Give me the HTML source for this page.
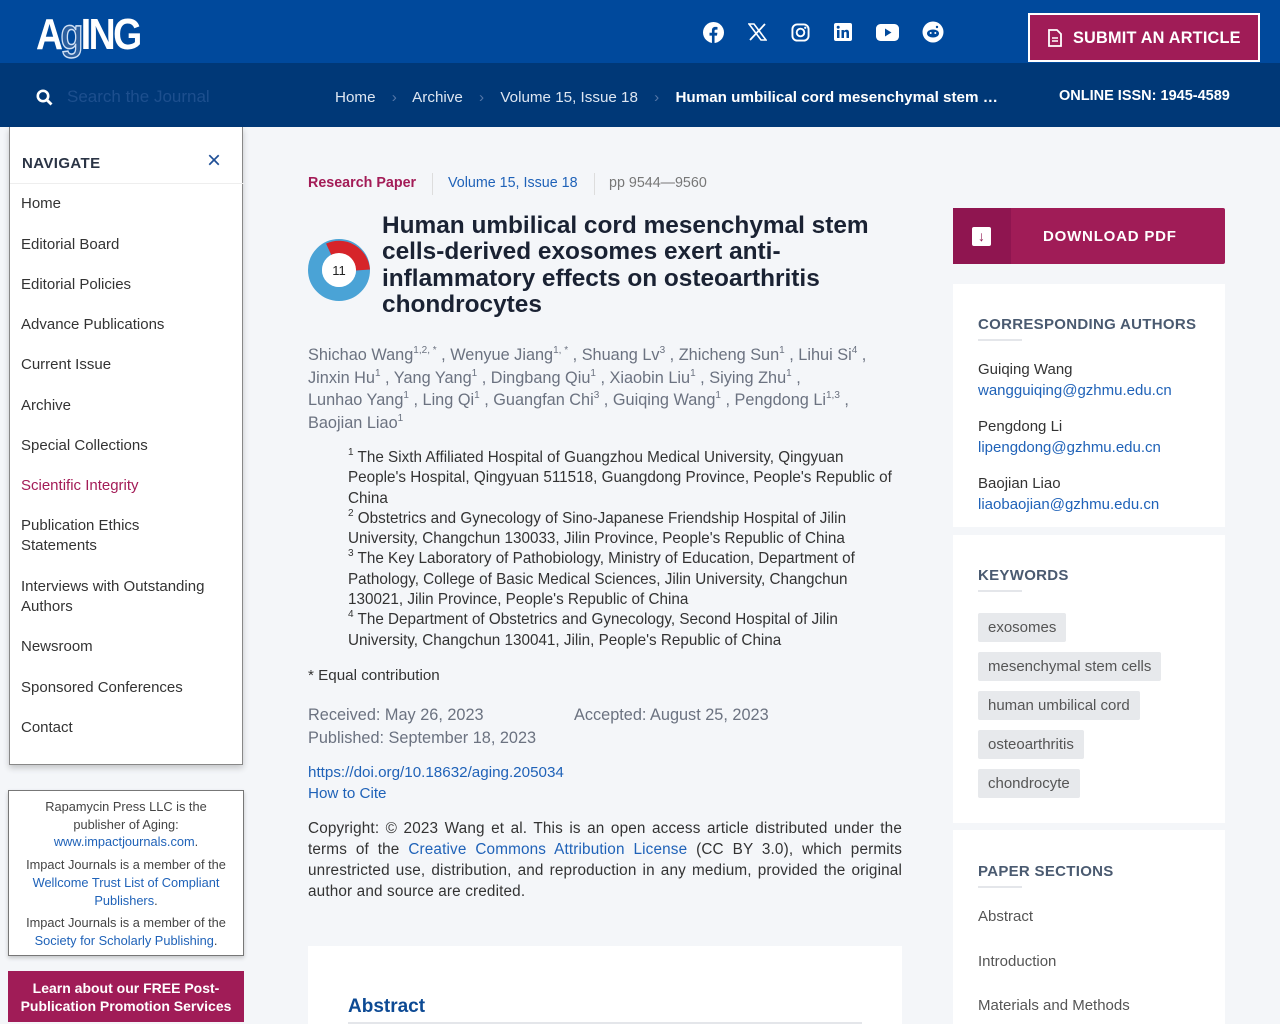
<!DOCTYPE html>
<html><head><meta charset="utf-8"><style>
*{margin:0;padding:0;box-sizing:border-box}
body{width:1280px;height:1024px;overflow:hidden;background:#f4f6f9;font-family:"Liberation Sans",Arial,sans-serif;position:relative;color:#333}
.a{position:absolute;white-space:nowrap}
#top{position:absolute;left:0;top:0;width:1280px;height:63px;background:#00499c}
#bar{position:absolute;left:0;top:63px;width:1280px;height:64px;background:#003877}
.nav{position:absolute;left:9px;top:127px;width:234px;height:638px;background:#fff;border:1px solid #888;border-top:none;box-shadow:0 3px 6px rgba(0,0,0,.2)}
.nav .i{position:absolute;left:11px;font-size:15px;color:#333;line-height:20px}
.blue{color:#1f62b8}
.card{position:absolute;background:#fff;left:953px;width:272px}
.kw{position:absolute;left:25px;height:29px;background:#e7e9ec;color:#555;font-size:15px;line-height:29px;padding:0 10px;border-radius:2px}
.h{position:absolute;left:25px;font-size:15px;font-weight:bold;color:#4a5a70;letter-spacing:.3px}
.ul{position:absolute;left:25px;width:44px;height:2px;background:#e4e6ea}
.au{font-size:16.3px;color:#6b7280;line-height:22.5px}
sup{font-size:10px;vertical-align:7px;line-height:0}
.aff{font-size:15.25px;color:#333;line-height:20.3px}
</style></head><body>
<div id="top"></div><div id="bar"></div>
<div class="a" style="left:36px;top:10px;font:bold 44px/50px 'Liberation Sans';color:#fff;letter-spacing:-3px;transform:scaleX(.85);transform-origin:left">A<span style="color:#2c5f9e;-webkit-text-stroke:1.5px #cfe0f5">g</span>ING</div>
<svg class="a" style="left:703px;top:22px" width="21" height="21" viewBox="0 0 20 20"><circle cx="10" cy="10" r="10" fill="#fff"/><path d="M11 20v-7h2.3l.4-2.8H11V8.6c0-.8.3-1.3 1.4-1.3h1.4V4.8c-.3 0-1.1-.1-2-.1-2 0-3.3 1.2-3.3 3.4v2.1H6.2V13h2.3v7z" fill="#00499c"/></svg>
<svg class="a" style="left:748px;top:23px" width="19" height="18" viewBox="0 0 19 18"><path d="M1 1h5l12 16h-5z" fill="none" stroke="#fff" stroke-width="1.6"/><path d="M17 1L2 17" stroke="#fff" stroke-width="1.8"/></svg>
<svg class="a" style="left:791px;top:23px" width="19" height="19" viewBox="0 0 20 20"><rect x="1.5" y="1.5" width="17" height="17" rx="5" fill="none" stroke="#fff" stroke-width="2"/><circle cx="10" cy="10" r="4" fill="none" stroke="#fff" stroke-width="2"/><circle cx="15" cy="5" r="1.2" fill="#fff"/></svg>
<svg class="a" style="left:834px;top:23px" width="18" height="18" viewBox="0 0 18 18"><rect width="18" height="18" rx="2" fill="#fff"/><rect x="3" y="7" width="2.5" height="8" fill="#00499c"/><circle cx="4.2" cy="4.3" r="1.5" fill="#00499c"/><path d="M7.5 7h2.4v1.2c.5-.9 1.5-1.4 2.6-1.4 2 0 2.5 1.3 2.5 3V15h-2.5v-4.6c0-1-.3-1.6-1.2-1.6s-1.3.7-1.3 1.6V15H7.5z" fill="#00499c"/></svg>
<svg class="a" style="left:876px;top:24px" width="23" height="17" viewBox="0 0 23 17"><rect width="23" height="17" rx="4.5" fill="#fff"/><path d="M9 4.5v8l6.5-4z" fill="#00499c"/></svg>
<svg class="a" style="left:922px;top:21px" width="22" height="22" viewBox="0 0 22 22"><circle cx="11" cy="11" r="10.5" fill="#fff"/><ellipse cx="11" cy="12.5" rx="6" ry="4" fill="#00499c"/><circle cx="8.7" cy="12" r="1" fill="#fff"/><circle cx="13.3" cy="12" r="1" fill="#fff"/><circle cx="15" cy="6" r="1.2" fill="#00499c"/></svg>
<div class="a" style="left:1028px;top:13px;width:232px;height:49px;background:#a01c57;border:2px solid #fff"></div>
<svg class="a" style="left:1048px;top:29px" width="14" height="18" viewBox="0 0 14 18"><path d="M1 1h8l4 4v12H1z" fill="none" stroke="#fff" stroke-width="1.8"/><path d="M4 9h6M4 12h6" stroke="#fff" stroke-width="1.6"/></svg>
<div class="a" style="left:1073px;top:29px;color:#fff;font-size:16.3px;font-weight:bold;letter-spacing:.2px">SUBMIT AN ARTICLE</div>
<svg class="a" style="left:36px;top:89px" width="17" height="17" viewBox="0 0 17 17"><circle cx="7" cy="7" r="5.2" fill="none" stroke="#fff" stroke-width="2.6"/><path d="M11 11l4.5 4.5" stroke="#fff" stroke-width="2.8"/></svg>
<div class="a" style="left:67px;top:87px;color:#1d4f8e;font-size:17px">Search the Journal</div>
<div class="a" style="left:335px;top:89px;color:#dde6f2;font-size:15.2px">Home <span style="color:#5577a8;margin:0 12px">›</span> Archive <span style="color:#5577a8;margin:0 12px">›</span> Volume 15, Issue 18 <span style="color:#5577a8;margin:0 12px">›</span> <b style="color:#fff">Human umbilical cord mesenchymal stem …</b></div>
<div class="a" style="left:1059px;top:88px;color:#fff;font-size:14.5px;font-weight:bold">ONLINE ISSN: 1945-4589</div>
<div class="nav">
<div class="a" style="left:12px;top:28px;font-size:15px;font-weight:bold;color:#2b3445;letter-spacing:.4px">NAVIGATE</div>
<div class="a" style="left:197px;top:20px;font-size:24px;color:#1f4f96">×</div>
<div style="position:absolute;left:0;top:56px;width:234px;height:1px;background:#eee"></div>
<div class="i" style="top:67px">Home</div>
<div class="i" style="top:108px">Editorial Board</div>
<div class="i" style="top:148px">Editorial Policies</div>
<div class="i" style="top:188px">Advance Publications</div>
<div class="i" style="top:228px">Current Issue</div>
<div class="i" style="top:269px">Archive</div>
<div class="i" style="top:309px">Special Collections</div>
<div class="i" style="top:349px;color:#a31c57">Scientific Integrity</div>
<div class="i" style="top:389px">Publication Ethics<br>Statements</div>
<div class="i" style="top:450px">Interviews with Outstanding<br>Authors</div>
<div class="i" style="top:510px">Newsroom</div>
<div class="i" style="top:551px">Sponsored Conferences</div>
<div class="i" style="top:591px">Contact</div>
</div>
<div class="a" style="left:8px;top:790px;width:236px;height:166px;background:#fff;border:1px solid #777;box-shadow:0 2px 4px rgba(0,0,0,.2);white-space:normal;text-align:center;font-size:12.8px;line-height:17.7px;color:#444;padding-top:7px">
<div>Rapamycin Press LLC is the<br>publisher of Aging:<br><span class="blue">www.impactjournals.com</span>.</div>
<div style="margin-top:5px">Impact Journals is a member of the<br><span class="blue">Wellcome Trust List of Compliant<br>Publishers</span>.</div>
<div style="margin-top:5px">Impact Journals is a member of the<br><span class="blue">Society for Scholarly Publishing</span>.</div></div>
<div class="a" style="left:8px;top:971px;width:236px;height:51px;background:#a01c57;color:#fff;font-size:14px;font-weight:bold;text-align:center;line-height:18px;padding-top:8px">Learn about our FREE Post-<br>Publication Promotion Services</div>
<div class="a" style="left:308px;top:175px;font-size:14.3px"><b style="color:#a31c57">Research Paper</b></div>
<div class="a" style="left:432px;top:173px;width:1px;height:22px;background:#ddd"></div>
<div class="a" style="left:448px;top:175px;font-size:14.3px;color:#1f62b8">Volume 15, Issue 18</div>
<div class="a" style="left:594px;top:173px;width:1px;height:22px;background:#ddd"></div>
<div class="a" style="left:609px;top:175px;font-size:14.3px;color:#777">pp 9544—9560</div>
<svg class="a" style="left:307px;top:238px" width="66" height="64" viewBox="0 0 66 64"><circle cx="32" cy="32" r="24" fill="none" stroke="#4aa3d6" stroke-width="14"/><path d="M22 12A24 24 0 0 1 56 32" fill="none" stroke="#d6242a" stroke-width="14"/><circle cx="32" cy="32" r="17" fill="#fff"/><text x="32" y="37" text-anchor="middle" font-size="13" font-family="Liberation Sans" fill="#222">11</text></svg>
<div class="a" style="left:382px;top:213px;font-size:24.4px;font-weight:bold;color:#1a2233;line-height:26.3px">Human umbilical cord mesenchymal stem<br>cells-derived exosomes exert anti-<br>inflammatory effects on osteoarthritis<br>chondrocytes</div>
<div class="a au" style="left:308px;top:344px">Shichao Wang<sup>1,2, *</sup> , Wenyue Jiang<sup>1, *</sup> , Shuang Lv<sup>3</sup> , Zhicheng Sun<sup>1</sup> , Lihui Si<sup>4</sup> ,<br>Jinxin Hu<sup>1</sup> , Yang Yang<sup>1</sup> , Dingbang Qiu<sup>1</sup> , Xiaobin Liu<sup>1</sup> , Siying Zhu<sup>1</sup> ,<br>Lunhao Yang<sup>1</sup> , Ling Qi<sup>1</sup> , Guangfan Chi<sup>3</sup> , Guiqing Wang<sup>1</sup> , Pengdong Li<sup>1,3</sup> ,<br>Baojian Liao<sup>1</sup></div>
<div class="a aff" style="left:348px;top:448px"><sup>1</sup> The Sixth Affiliated Hospital of Guangzhou Medical University, Qingyuan<br>People's Hospital, Qingyuan 511518, Guangdong Province, People's Republic of<br>China<br><sup>2</sup> Obstetrics and Gynecology of Sino-Japanese Friendship Hospital of Jilin<br>University, Changchun 130033, Jilin Province, People's Republic of China<br><sup>3</sup> The Key Laboratory of Pathobiology, Ministry of Education, Department of<br>Pathology, College of Basic Medical Sciences, Jilin University, Changchun<br>130021, Jilin Province, People's Republic of China<br><sup>4</sup> The Department of Obstetrics and Gynecology, Second Hospital of Jilin<br>University, Changchun 130041, Jilin, People's Republic of China</div>
<div class="a" style="left:308px;top:667px;font-size:15.2px;color:#333">* Equal contribution</div>
<div class="a" style="left:308px;top:704px;font-size:16.3px;color:#6b7280;line-height:23px">Received: May 26, 2023<br>Published: September 18, 2023</div>
<div class="a" style="left:574px;top:704px;font-size:16.3px;color:#6b7280;line-height:23px">Accepted: August 25, 2023</div>
<div class="a" style="left:308px;top:762px;font-size:15.2px;color:#1f62b8;line-height:21px">https://doi.org/10.18632/aging.205034<br>How to Cite</div>
<div class="a" style="left:308px;top:818px;width:594px;white-space:normal;text-align:justify;font-size:15.3px;line-height:21px;color:#333;letter-spacing:.15px">Copyright: © 2023 Wang et al. This is an open access article distributed under the terms of the <span class="blue">Creative Commons Attribution License</span> (CC BY 3.0), which permits unrestricted use, distribution, and reproduction in any medium, provided the original author and source are credited.</div>
<div class="a" style="left:308px;top:946px;width:594px;height:78px;background:#fff"></div>
<div class="a" style="left:348px;top:996px;font-size:19px;font-weight:bold;color:#0d4a94">Abstract</div>
<div class="a" style="left:348px;top:1022px;width:514px;height:2px;background:#e4e6ea"></div>
<div class="a" style="left:953px;top:208px;width:272px;height:56px;background:#a01c57;border-radius:2px"></div>
<div class="a" style="left:953px;top:208px;width:58px;height:56px;background:#8f1550"></div>
<div class="a" style="left:972px;top:227px;width:19px;height:19px;background:#fff;border-radius:2px;color:#8f1550;font-size:14px;font-weight:bold;text-align:center;line-height:19px">↓</div>
<div class="a" style="left:1043px;top:228px;font-size:15px;font-weight:bold;color:#fff;letter-spacing:.8px">DOWNLOAD PDF</div>
<div class="card" style="top:284px;height:243px">
<div class="h" style="top:32px">CORRESPONDING AUTHORS</div><div class="ul" style="top:55px"></div>
<div class="a" style="left:25px;top:75px;font-size:15px;line-height:21px;color:#333">Guiqing Wang<br><span class="blue">wangguiqing@gzhmu.edu.cn</span></div>
<div class="a" style="left:25px;top:132px;font-size:15px;line-height:21px;color:#333">Pengdong Li<br><span class="blue">lipengdong@gzhmu.edu.cn</span></div>
<div class="a" style="left:25px;top:189px;font-size:15px;line-height:21px;color:#333">Baojian Liao<br><span class="blue">liaobaojian@gzhmu.edu.cn</span></div>
</div>
<div class="card" style="top:535px;height:288px">
<div class="h" style="top:32px">KEYWORDS</div><div class="ul" style="top:55px"></div>
<div class="kw" style="top:78px">exosomes</div>
<div class="kw" style="top:117px">mesenchymal stem cells</div>
<div class="kw" style="top:156px">human umbilical cord</div>
<div class="kw" style="top:195px">osteoarthritis</div>
<div class="kw" style="top:234px">chondrocyte</div>
</div>
<div class="card" style="top:830px;height:194px">
<div class="h" style="top:33px">PAPER SECTIONS</div><div class="ul" style="top:56px"></div>
<div class="a" style="left:25px;top:78px;font-size:15px;color:#555">Abstract</div>
<div class="a" style="left:25px;top:123px;font-size:15px;color:#555">Introduction</div>
<div class="a" style="left:25px;top:167px;font-size:15px;color:#555">Materials and Methods</div>
</div>
</body></html>
